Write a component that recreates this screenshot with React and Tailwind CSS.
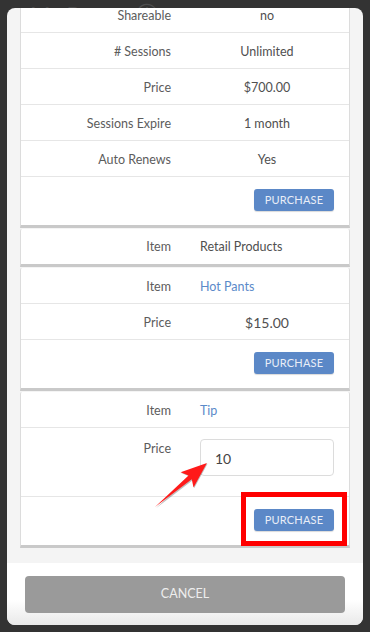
import React from "react";

const font = { fontFamily: "Lato, 'Liberation Sans', sans-serif" };

function Row({ label, children, last, center = true }) {
  return (
    <div className={`flex items-center h-[36px] pt-[3px] ${last ? "" : "border-b border-[#e6e6e6]"}`}>
      <div className="w-[150px] text-right text-[12.5px] text-[#5c5c5c]">{label}</div>
      <div className={`ml-[29px] w-[134px] text-[12.5px] text-[#505050] ${center ? "text-center" : "text-left"}`}>
        {children}
      </div>
    </div>
  );
}

function PurchaseRow() {
  return (
    <div className="h-[48px] flex items-start justify-end pr-[15px] pt-[12px]">
      <button className="w-[80px] h-[22px] rounded-[3px] bg-[#5b88c7] text-[#e9eef7] text-[11px] tracking-[0.2px] shadow-[0_1px_1px_rgba(0,0,0,0.15)]">
        PURCHASE
      </button>
    </div>
  );
}

function Card({ children, className = "" }) {
  return (
    <div className={`bg-white border-x border-[#dcdcdc] border-b-[3px] border-b-[#c9c9c9] rounded-t-[2px] mb-[1px] ${className}`}>
      {children}
    </div>
  );
}

export default function App() {
  return (
    <div className="w-[370px] h-[632px] bg-[#333] overflow-hidden relative" style={font}>
      <div className="h-[8px] overflow-hidden pl-[30px] pt-[3px] text-[22px] leading-[22px] text-[#4d4d4d]">
        My Passes ⓘ
      </div>
      <div className="mx-[7px] h-[617px] bg-[#f4f4f4] rounded-[8px] flex flex-col overflow-hidden">
        <div className="flex-1 overflow-hidden px-[13px]">
          <div className="-mt-[11px]">
            <Card>
              <Row label="Shareable">no</Row>
              <Row label="# Sessions">Unlimited</Row>
              <Row label="Price">$700.00</Row>
              <Row label="Sessions Expire">1 month</Row>
              <Row label="Auto Renews">Yes</Row>
              <PurchaseRow />
            </Card>
            <Card>
              <div className="flex items-center h-[35px] pt-[2px]">
                <div className="w-[150px] text-right text-[12.5px] text-[#5c5c5c]">Item</div>
                <div className="ml-[29px] text-[12.5px] text-[#505050]">Retail Products</div>
              </div>
            </Card>
            <Card>
              <Row label="Item" center={false}>
                <span className="text-[#5b8ac9]">Hot Pants</span>
              </Row>
              <Row label="Price">
                <span className="text-[14px]">$15.00</span>
              </Row>
              <PurchaseRow />
            </Card>
            <Card>
              <Row label="Item" center={false}>
                <span className="text-[#5b8ac9]">Tip</span>
              </Row>
              <div className="flex items-start h-[69px] border-b border-[#e6e6e6] pt-[11px]">
                <div className="w-[150px] text-right text-[12.5px] text-[#5c5c5c] pt-[1px]">Price</div>
                <div className="ml-[29px] w-[134px] h-[37px] border border-[#dcdcdc] rounded-[4px] flex items-center pl-[14px] pt-[2px] text-[14px] text-[#444]">
                  10
                </div>
              </div>
              <PurchaseRow />
            </Card>
          </div>
        </div>
        <div className="h-[62px] bg-gradient-to-b from-white from-60% to-[#e9e9e9] px-[18px] pt-[13px]">
          <button className="w-full h-[37px] rounded-[4px] bg-[#9a9a9a] text-[#eeeeee] text-[12.5px]">
            CANCEL
          </button>
        </div>
      </div>

      <div className="absolute left-[241px] top-[492px] w-[106px] h-[54px] border-[5px] border-[#ff0000]" />
      <svg className="absolute left-[150px] top-[455px]" width="65" height="60" viewBox="0 0 65 60">
        <g transform="translate(5 52) rotate(-40.2)">
          <polygon points="0,1.5 46,-1 42,-9 68,1 42,11 46,4" fill="rgba(0,0,0,0.25)" />
          <polygon points="0,0 46,-2.5 42,-10 68,0 42,10 46,2.5" fill="#ff1a1a" />
        </g>
      </svg>
    </div>
  );
}
